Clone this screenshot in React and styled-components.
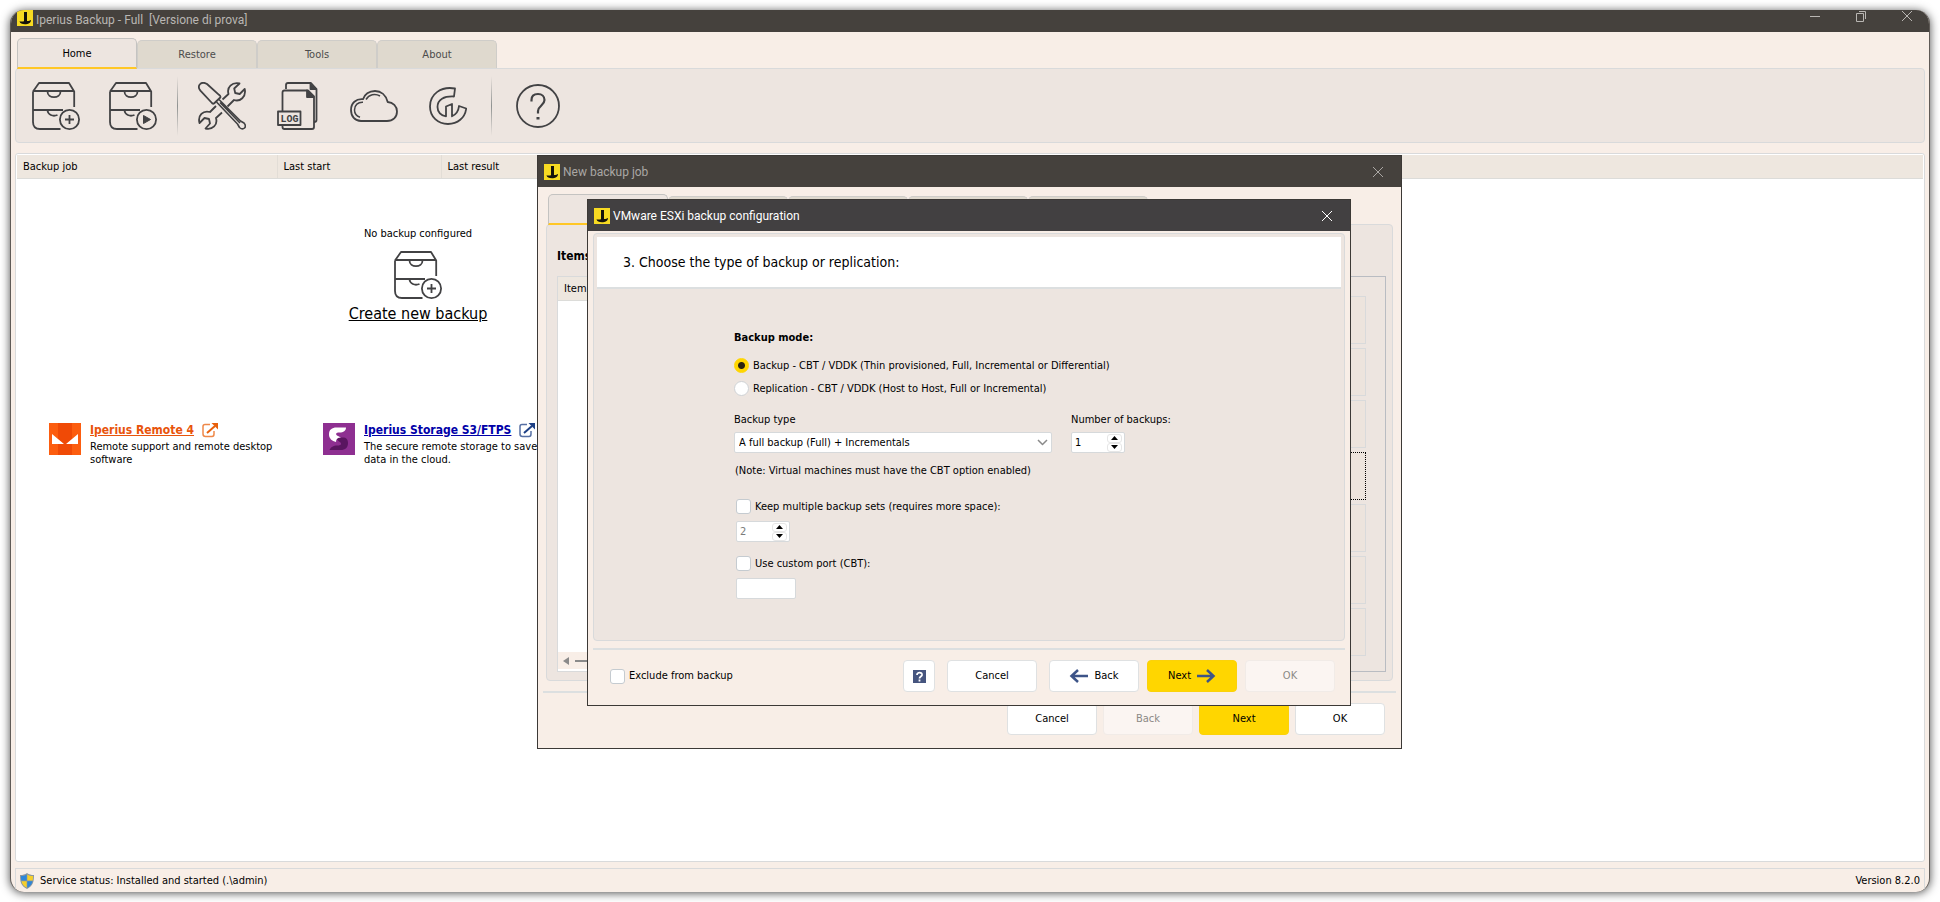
import React from 'react';
import styled, { createGlobalStyle, css } from 'styled-components';

const color = {
    window: '#f8eee7',
    panel: '#ede5e0',
    tab: '#dfd9ce',
    header: '#eee7df',
    title: '#45413d',
    titleActive: '#424041',
    border: '#d9dadb',
    line: '#dcdfe0',
    yellow: '#ffd600',
    amber: '#ffc726',
    ink: '#424244',
    navy: '#3d5488',
};

const uiFont = '"DejaVu Sans Condensed", Tahoma, "DejaVu Sans", sans-serif';
const titleFont = 'Roboto, "Segoe UI", "Noto Sans", sans-serif';

const GlobalStyle = createGlobalStyle`
    * {
        box-sizing: border-box;
    }
    body {
        margin: 0;
        background: #fff;
        color: #000;
        font: 11px/14px ${uiFont};
    }
    button,
    input,
    select {
        font: inherit;
        color: inherit;
    }
`;

// Window frame //
const Desktop = styled.div`
    position: relative;
    display: flex;
    min-height: 100vh;
    padding: 10px;
`;

const MainWindow = styled.main`
    flex: 1;
    display: flex;
    flex-direction: column;
    overflow: hidden;
    isolation: isolate;
    background: ${color.window};
    border: 1px solid #5f5a56;
    border-width: 0 1px;
    border-radius: 14px;
    box-shadow: 0 1px 10px rgba(0, 0, 0, 0.7);
`;

const TitleBar = styled.header`
    flex: none;
    display: flex;
    align-items: flex-start;
    height: 22px;
    padding: 0 16px 0 6px;
    background: ${color.title};
    color: #b9b6b3;
    font: 12px/20px ${titleFont};
`;

const TitleText = styled.h1`
    flex: 1;
    margin: 0 0 0 3px;
    font: inherit;
    white-space: pre;
`;

const WindowControls = styled.div`
    display: flex;
    gap: 32px;
`;

const WindowButton = styled.button`
    display: flex;
    padding: 0;
    border: 0;
    background: none;
    color: inherit;
`;

// Tabs and toolbar //
const Tabs = styled.nav`
    display: flex;
    align-items: flex-end;
    padding: ${({ $pad }) => $pad};
`;

const Tab = styled.button`
    width: 120px;
    height: 28px;
    padding: 0;
    border: 1px solid #cfcdc9;
    border-bottom: 0;
    border-radius: 5px 5px 0 0;
    background: ${color.tab};
    color: #4c4c4c;
    ${({ $active }) =>
        $active &&
        css`
            height: 31px;
            padding-top: 2px;
            border-color: #c4c3c1;
            border-bottom: 2px solid ${color.amber};
            background: ${color.panel};
            color: #000;
            margin-bottom: -1px;
            z-index: 1;
        `}
`;

const Toolbar = styled.div`
    display: flex;
    align-items: center;
    height: 75px;
    margin: 0 4px;
    padding: 0 16px;
    background: ${color.panel};
    border: 1px solid ${color.border};
    border-radius: 4px;
`;

const ToolGroup = styled.div`
    display: flex;
    align-items: center;
    gap: ${({ $gap }) => $gap}px;
`;

const ToolButton = styled.button`
    display: flex;
    padding: 0;
    border: 0;
    background: none;
    color: ${color.ink};
`;

const Divider = styled.span`
    width: 1px;
    height: 60px;
    margin: 0 ${({ $space }) => $space}px;
    background: linear-gradient(transparent, #8f9291, transparent);
`;

// Job list //
const JobList = styled.section`
    flex: 1;
    display: flex;
    flex-direction: column;
    margin: 10px 4px 6px;
    padding: 1px;
    background: #fff;
    border: 1px solid ${color.border};
    border-radius: 3px;
`;

const JobTable = styled.table`
    width: 100%;
    table-layout: fixed;
    border-collapse: collapse;
`;

const Th = styled.th`
    width: ${({ $width }) => $width}px;
    height: 23px;
    padding: 1px 6px 0;
    background: ${color.header};
    border-right: 1px solid #e2ddd6;
    border-bottom: 1px solid #dcdcd9;
    font-weight: normal;
    text-align: left;
    &:last-child {
        width: auto;
        border-right: 0;
    }
`;

const JobBody = styled.div`
    padding: 48px 32px 0;
`;

const EmptyState = styled.div`
    display: flex;
    flex-direction: column;
    align-items: center;
    width: 738px;
`;

const EmptyIcon = styled.div`
    display: flex;
    margin: 10px 0 4px;
`;

const CreateLink = styled.a`
    color: #000;
    font-size: 16px;
    line-height: 22px;
`;

const Promos = styled.div`
    display: flex;
    margin-top: 98px;
`;

const Promo = styled.article`
    display: flex;
    gap: 9px;
    width: 274px;
    svg {
        flex: none;
    }
`;

const PromoText = styled.p`
    width: 190px;
    margin: 2px 0 0;
    line-height: 13px;
`;

const PromoLink = styled.a`
    display: flex;
    gap: 8px;
    color: ${({ $color }) => $color};
    font-size: 12px;
    line-height: 15px;
    font-weight: bold;
    white-space: nowrap;
`;

const StatusBar = styled.footer`
    display: flex;
    align-items: center;
    height: 24px;
    margin: 0 4px;
    padding: 1px 4px 0;
    gap: 6px;
    border: 1px solid ${color.border};
    border-bottom: 0;
    span:last-child {
        margin-left: auto;
    }
`;

// Dialogs //
const Dialog = styled.section`
    position: absolute;
    isolation: isolate;
    left: ${({ $left }) => $left}px;
    top: ${({ $top }) => $top}px;
    width: ${({ $width }) => $width}px;
    background: ${color.window};
    border: 1px solid #3c3936;
`;

const DialogTitle = styled(TitleBar)`
    align-items: center;
    height: 31px;
    padding: 0 17px 0 6px;
    background: ${({ $active }) => ($active ? color.titleActive : color.title)};
    color: ${({ $active }) => ($active ? '#fff' : '#aaa7a4')};
`;

const DialogHeading = styled(TitleText).attrs({ as: 'h2' })``;

const ItemsPanel = styled.div`
    margin: 0 8px;
    padding: 24px 6px 8px 10px;
    background: ${color.panel};
    border: 1px solid ${color.border};
    border-radius: 4px;
`;

const ItemsHeading = styled.h3`
    margin: 0 0 13px;
    font-size: 12px;
    line-height: 14px;
`;

const ItemsRow = styled.div`
    display: flex;
    gap: 12px;
`;

const ItemsList = styled.div`
    flex: 1;
    display: flex;
    flex-direction: column;
    background: #fff;
    border: 1px solid ${color.border};
`;

const ItemsBody = styled.div`
    flex: 1;
`;

const ScrollTrack = styled.div`
    display: flex;
    align-items: center;
    gap: 6px;
    height: 17px;
    margin-bottom: 2px;
    padding: 0 5px;
    background: ${color.window};
    span {
        flex: 1;
        height: 2px;
        background: #8a8a8a;
    }
`;

const ItemActions = styled.div`
    display: grid;
    gap: 4px;
    width: 200px;
    padding: 19px 19px 15px;
    border: 1px solid #b9bcc2;
`;

const ItemAction = styled.button`
    height: 48px;
    border: 1px solid ${color.border};
    background: #ede4dd;
    ${({ $focused }) => $focused && 'border: 1px dotted #000;'}
`;

const Separator = styled.hr`
    height: 2px;
    margin: ${({ $top }) => $top}px 5px 0;
    border: 0;
    background: ${color.line};
`;

const DialogFooter = styled.footer`
    display: flex;
    justify-content: flex-end;
    align-items: center;
    gap: ${({ $gap }) => $gap}px;
    padding: ${({ $pad }) => $pad};
`;

const Button = styled.button`
    display: flex;
    align-items: center;
    justify-content: center;
    gap: 5px;
    width: ${({ $square }) => ($square ? 32 : 90)}px;
    height: 32px;
    padding: 0;
    background: ${({ $primary }) => ($primary ? color.yellow : '#fff')};
    border: 1px solid ${({ $primary }) => ($primary ? '#fbd20a' : '#dfe1e2')};
    border-radius: 4px;
    &:disabled {
        background: #fbf5f2;
        border-color: #f1ebe7;
        color: #8c8986;
    }
`;

const ConfigPanel = styled.form`
    margin: 2px 5px 0;
    padding: 3px;
    background: ${color.panel};
    border: 1px solid ${color.border};
    border-radius: 4px;
`;

const StepHeader = styled.h3`
    margin: 0;
    padding: 0 26px;
    background: #fff;
    box-shadow: 0 2px 0 ${color.line};
    font-weight: normal;
    font-size: 14px;
    line-height: 50px;
`;

const Form = styled.div`
    padding: 44px 0 24px 137px;
`;

const ModeGroup = styled.fieldset`
    display: grid;
    gap: 8px;
    margin: 0 0 17px;
    padding: 0;
    border: 0;
`;

const Legend = styled.legend`
    margin-bottom: 13px;
    padding: 0;
    font-weight: bold;
`;

const CheckLabel = styled.label`
    display: flex;
    align-items: center;
    gap: 4px;
    height: 15px;
`;

const Radio = styled.input.attrs({ type: 'radio' })`
    appearance: none;
    width: 15px;
    height: 15px;
    margin: 0;
    border: 1px solid #cfd2d5;
    border-radius: 50%;
    background: #fff;
    &:checked {
        border-color: ${color.yellow};
        background: radial-gradient(circle, #2b2410 3px, ${color.yellow} 4px);
    }
`;

const Checkbox = styled.input.attrs({ type: 'checkbox' })`
    appearance: none;
    width: 15px;
    height: 15px;
    margin: 0;
    border: 1px solid #c5cbd0;
    border-radius: 3px;
    background: #fff;
`;

const FieldRow = styled.div`
    display: flex;
    gap: 19px;
    margin-bottom: 11px;
`;

const Field = styled.div`
    display: grid;
    justify-items: start;
    gap: 5px;
`;

const SelectBox = styled.div`
    display: grid;
    align-items: center;
    width: 318px;
    select,
    svg {
        grid-area: 1 / 1;
    }
    svg {
        justify-self: end;
        margin-right: 4px;
        pointer-events: none;
    }
`;

const inputStyle = css`
    height: 21px;
    border: 1px solid #d6d9db;
    border-radius: 2px;
    background: #fff;
`;

const Select = styled.select`
    appearance: none;
    width: 100%;
    padding: 0 4px;
    ${inputStyle}
`;

const SpinBox = styled.div`
    display: flex;
    align-items: center;
    width: 54px;
    padding: 0 2px;
    ${inputStyle}
    input {
        flex: 1;
        min-width: 0;
        padding: 0 1px;
        border: 0;
        background: none;
        appearance: textfield;
    }
    input:disabled {
        color: #7b7b7b;
    }
`;

const SpinButtons = styled.div`
    display: grid;
    button {
        display: flex;
        align-items: center;
        justify-content: center;
        width: 15px;
        height: 9px;
        padding: 0;
        border: 1px solid #e6e6e6;
        border-radius: 3px;
        background: #fff;
    }
`;

const PortInput = styled.input`
    width: 60px;
    padding: 0 4px;
    ${inputStyle}
`;

const Note = styled.p`
    margin: 0 0 21px 1px;
`;

const Option = styled.div`
    display: grid;
    justify-items: start;
    gap: 7px;
    margin: 0 0 14px 2px;
`;

const ExcludeLabel = styled(CheckLabel)`
    margin-right: auto;
`;

// Icons //
const Icon = ({ w = 48, h = 48, children, ...rest }) => (
    <svg
        width={w}
        height={h}
        viewBox={`0 0 ${w} ${h}`}
        fill="none"
        stroke="currentColor"
        strokeWidth="1.8"
        strokeLinejoin="round"
        aria-hidden="true"
        {...rest}
    >
        {children}
    </svg>
);

const AppLogo = () => (
    <Icon w={16} h={16} stroke="none">
        <path d="M0 0h16v16H0z" fill="#f7da22" />
        <path
            d="M7 2h3v9c2 0 3-.5 4-1 0 3-3 4.200-6 4.200S3 13.500 2.500 11.200c1.500.4 3 .3 4.500 0z"
            fill="#15130b"
        />
    </Icon>
);

const Cabinet = ({ play }) => (
    <Icon stroke={color.ink}>
        <path d="M1 9.500 7 1h30l5.200 8.500V25M1 9.500V40q0 7 7 7h20.500M1 9h41M1 28h30M15.500 9.500c0 7.500 13 7.500 13 0M15.500 28.500c.5 4 5 6.500 10 4.500" />
        <circle cx="37.500" cy="37.500" r="9.600" />
        {play ? (
            <path d="M34.500 33.500v8l7-4z" fill={color.ink} strokeWidth="1" />
        ) : (
            <path d="M37.500 33v9M33 37.500h9" />
        )}
    </Icon>
);

const ToolsIcon = () => (
    <Icon>
        <path d="M2.400 8.600 13.500 20.500q1.200 1.700 2.500 1l6.300-6q.8-1-1.300-2.700L9 2C3-1.500-1.500 4 2.400 8.600z" />
        <path d="m18.500 20 21 22 2 3.500q3 2.500 5 .5t-.5-5L42.500 39 21 17.500M22 20.500l20 20.500" strokeWidth="1.600" />
        <path d="m24.500 17.500 6-5.500C28.500 5 34 0 41.500 1.500l-5.300 5 1 4.500 4.500 1 5-5C48.500 15 42 20 36 18l-6.500 6.500" />
        <path d="m24 30.500-6 5.500c2 7-3.500 12-10.500 10.500l4.500-5-1-4.500-4.500-1-5 5C-.5 33.500 5 28 12 30l6-6" />
    </Icon>
);

const LogIcon = () => (
    <Icon w={42}>
        <path d="M9 7V3q0-2 2-2h23l5.500 6v31q0 2-2.500 2" />
        <path d="M33.500 1v6h6M30 8.500V15h6.500z" fill="currentColor" />
        <path d="M5.500 29V10.500q0-2 2-2H31l6 6V45q0 2-2 2H7.500q-2 0-2-2v-2" />
        <rect x="1" y="29.500" width="22.500" height="13.500" />
        <text
            x="12.500"
            y="40"
            textAnchor="middle"
            fontFamily="Liberation Mono, monospace"
            fontSize="10"
            fontWeight="bold"
            fill="currentColor"
            stroke="none"
        >
            LOG
        </text>
    </Icon>
);

const CloudIcon = () => (
    <Icon h={32}>
        <path d="M11 31h26c6 0 10-4 10-9.500S43 12.300 37.700 12C36 5 31 1 25 1 19 1 14.500 4.500 13 9.200 6 8.500 1 13 1 20c0 6.500 4 11 10 11z" />
        <path d="M13 12.300C8 12 4.500 15 4.500 20c0 3.500 2 6 5.500 7.300M16 9.500C19 4.500 25 3 30 6" strokeWidth="1.500" />
    </Icon>
);

const GaugeIcon = () => (
    <Icon w={38} h={38}>
        <path d="M26 1.500C12-1 1 7 1 19.500 1 30 9 37 19 37c9.500 0 17-6 18.200-15.500L30 19c-.5 5-3 8.500-7 10.300V17l-6 2.500v9.800C12 29 8.500 25 8.500 20 8.500 12.500 15 9 25 9.500z" />
    </Icon>
);

const HelpIcon = () => (
    <Icon w={44} h={44}>
        <circle cx="22" cy="22" r="21" />
        <path d="M15.500 17.500V16c0-4 2.500-6 6.500-6s6.500 2.500 6.500 6c0 5.500-6.500 6-6.500 11v2.500" strokeWidth="2.200" />
        <path d="M22 33v2.500" strokeWidth="3" />
    </Icon>
);

const RemoteLogo = () => (
    <Icon w={32} h={32} stroke="none">
        <path d="M0 0h32v32H0z" fill="#fc5d0f" />
        <path d="M9 0h14v32H9z" fill="#f04a06" />
        <path d="M3 11v10h12zM29 11v10H17z" fill="#fff" />
    </Icon>
);

const StorageLogo = () => (
    <Icon w={32} h={32} stroke="none">
        <path d="M0 0h32v32H0z" fill="#8e2f91" />
        <path d="M12 14.500h7.500c4 0 5.500 2 5.500 5.500 0 4.500-2.500 7-7.500 7H6.500c1.500-3 3.500-4.500 8-4.500 4.500 0 4.500-2.500 1.500-4z" fill="#5a1560" />
        <path d="M23 4.500c0 3.500-2.500 5-6.500 5-4 0-4.500 2-1.500 3.500l3 1.500c-3.500 0-5 1.500-5 4.500-4-1-7-3.500-7-7.500 0-5 3-7 7.500-7z" fill="#fff" />
    </Icon>
);

const ExternalIcon = ({ accent }) => (
    <Icon w={16} h={15} strokeWidth="1.500">
        <path d="M8 1.500H3q-2 0-2 2V11q0 2.500 2.500 2.500H10q2 0 2-2.500V8" stroke={accent} opacity=".75" />
        <path d="M5 10 13 3" stroke={accent} strokeWidth="2" />
        <path d="M9.500 0H16v6.500z" fill={accent} stroke="none" />
    </Icon>
);

const Shield = () => (
    <Icon w={14} h={16} stroke="none">
        <path d="M7 0c2 1.500 4 2 7 2 0 7-1 11-7 14C1 13 0 9 0 2c3 0 5-.5 7-2z" fill="#8d979f" />
        <path d="M6.700 1.500V7.500H1.300C1 6 1 4.500 1 3c2.500 0 4-.5 5.700-1.500zM7.300 8.200h5.200c-.6 3-2.200 5-5.200 6.500z" fill="#2f86d8" />
        <path d="M7.300 1.500V7.500h5.400C13 6 13 4.500 13 3c-2.500 0-4-.5-5.700-1.500zM6.700 8.200H1.500c.6 3 2.200 5 5.200 6.500z" fill="#f6cf2b" />
    </Icon>
);

const CloseIcon = () => (
    <Icon w={12} h={12} strokeWidth="1">
        <path d="m1 1 10 10M11 1 1 11" />
    </Icon>
);

const Arrow = ({ right }) => (
    <Icon w={20} h={14} stroke={color.navy} strokeWidth="2.500" strokeLinejoin="miter">
        {right ? <path d="M1 7h17M11 1l6.500 6-6.500 6" /> : <path d="M19 7H2M9 1 2.500 7 9 13" />}
    </Icon>
);

const Caret = ({ up }) => (
    <Icon w={7} h={4} stroke="none">
        <path d={up ? 'M0 4 3.500 0 7 4z' : 'M0 0l3.500 4L7 0z'} fill="#000" />
    </Icon>
);

const Spinner = ({ id, ...rest }) => (
    <SpinBox>
        <input id={id} type="number" {...rest} />
        <SpinButtons>
            <button type="button" aria-label="Increase"><Caret up /></button>
            <button type="button" aria-label="Decrease"><Caret /></button>
        </SpinButtons>
    </SpinBox>
);

const MAIN_TABS = ['Home', 'Restore', 'Tools', 'About'];

const MainArea = () => (
    <MainWindow>
        <TitleBar>
            <AppLogo />
            <TitleText>{'Iperius Backup - Full  [Versione di prova]'}</TitleText>
            <WindowControls>
                <WindowButton aria-label="Minimize">
                    <Icon w={12} h={12} strokeWidth="1"><path d="M1 6.500h10" /></Icon>
                </WindowButton>
                <WindowButton aria-label="Restore down">
                    <Icon w={16} h={12} strokeWidth="1">
                        <path d="M3.500 3.500h7v8h-7zM6 1.500h6.500V9" />
                    </Icon>
                </WindowButton>
                <WindowButton aria-label="Close"><CloseIcon /></WindowButton>
            </WindowControls>
        </TitleBar>
        <Tabs $pad="6px 6px 0">
            {MAIN_TABS.map((name, i) => (
                <Tab key={name} $active={i === 0}>{name}</Tab>
            ))}
        </Tabs>
        <Toolbar>
            <ToolGroup $gap={29}>
                <ToolButton aria-label="New backup job"><Cabinet /></ToolButton>
                <ToolButton aria-label="Run backup job"><Cabinet play /></ToolButton>
            </ToolGroup>
            <Divider $space={20} />
            <ToolGroup $gap={31}>
                <ToolButton aria-label="Settings"><ToolsIcon /></ToolButton>
                <ToolButton aria-label="Log"><LogIcon /></ToolButton>
                <ToolButton aria-label="Cloud"><CloudIcon /></ToolButton>
                <ToolButton aria-label="Console"><GaugeIcon /></ToolButton>
            </ToolGroup>
            <Divider $space={24} />
            <ToolButton aria-label="Help"><HelpIcon /></ToolButton>
        </Toolbar>
        <JobList>
            <JobTable>
                <thead>
                    <tr>
                        <Th $width={260}>Backup job</Th>
                        <Th $width={164}>Last start</Th>
                        <Th>Last result</Th>
                    </tr>
                </thead>
            </JobTable>
            <JobBody>
                <EmptyState>
                    <span>No backup configured</span>
                    <EmptyIcon><Cabinet /></EmptyIcon>
                    <CreateLink href="#new">Create new backup</CreateLink>
                </EmptyState>
                <Promos>
                    <Promo>
                        <RemoteLogo />
                        <div>
                            <PromoLink href="#remote" $color="#e8540c">
                                Iperius Remote 4 <ExternalIcon accent="#e8600c" />
                            </PromoLink>
                            <PromoText>Remote support and remote desktop software</PromoText>
                        </div>
                    </Promo>
                    <Promo>
                        <StorageLogo />
                        <div>
                            <PromoLink href="#storage" $color="#0000a8">
                                Iperius Storage S3/FTPS <ExternalIcon accent="#1d3f84" />
                            </PromoLink>
                            <PromoText>The secure remote storage to save data in the cloud.</PromoText>
                        </div>
                    </Promo>
                </Promos>
            </JobBody>
        </JobList>
        <StatusBar>
            <Shield />
            <span>Service status: Installed and started (.\admin)</span>
            <span>Version 8.2.0</span>
        </StatusBar>
    </MainWindow>
);

const JobDialog = () => (
    <Dialog $left={537} $top={155} $width={865} aria-labelledby="job-title">
        <DialogTitle>
            <AppLogo />
            <DialogHeading id="job-title">New backup job</DialogHeading>
            <WindowButton aria-label="Close"><CloseIcon /></WindowButton>
        </DialogTitle>
        <Tabs $pad="7px 10px 0">
            {[0, 1, 2, 3, 4].map((i) => (
                <Tab key={i} $active={i === 0} />
            ))}
        </Tabs>
        <ItemsPanel>
            <ItemsHeading>Items</ItemsHeading>
            <ItemsRow>
                <ItemsList>
                    <JobTable>
                        <thead>
                            <tr><Th>Item</Th></tr>
                        </thead>
                    </JobTable>
                    <ItemsBody />
                    <ScrollTrack>
                        <Icon w={6} h={8} stroke="none">
                            <path d="M6 0v8L0 4z" fill="#8a8a8a" />
                        </Icon>
                        <span />
                    </ScrollTrack>
                </ItemsList>
                <ItemActions>
                    {[0, 1, 2, 3, 4, 5, 6].map((i) => (
                        <ItemAction key={i} $focused={i === 3} />
                    ))}
                </ItemActions>
            </ItemsRow>
        </ItemsPanel>
        <Separator $top={10} />
        <DialogFooter $gap={6} $pad="10px 16px 13px">
            <Button>Cancel</Button>
            <Button disabled>Back</Button>
            <Button $primary>Next</Button>
            <Button>OK</Button>
        </DialogFooter>
    </Dialog>
);

const ConfigDialog = () => (
    <Dialog $left={587} $top={199} $width={764} aria-labelledby="config-title">
        <DialogTitle $active>
            <AppLogo />
            <DialogHeading id="config-title">VMware ESXi backup configuration</DialogHeading>
            <WindowButton aria-label="Close"><CloseIcon /></WindowButton>
        </DialogTitle>
        <ConfigPanel>
            <StepHeader>3. Choose the type of backup or replication:</StepHeader>
            <Form>
                <ModeGroup>
                    <Legend>Backup mode:</Legend>
                    <CheckLabel>
                        <Radio name="mode" defaultChecked />
                        Backup - CBT / VDDK (Thin provisioned, Full, Incremental or Differential)
                    </CheckLabel>
                    <CheckLabel>
                        <Radio name="mode" />
                        Replication - CBT / VDDK (Host to Host, Full or Incremental)
                    </CheckLabel>
                </ModeGroup>
                <FieldRow>
                    <Field>
                        <label htmlFor="backup-type">Backup type</label>
                        <SelectBox>
                            <Select id="backup-type">
                                <option>A full backup (Full) + Incrementals</option>
                            </Select>
                            <Icon w={11} h={7} stroke="#8a8a8a" strokeWidth="1.500">
                                <path d="m1 1 4.500 4.500L10 1" />
                            </Icon>
                        </SelectBox>
                    </Field>
                    <Field>
                        <label htmlFor="backup-count">Number of backups:</label>
                        <Spinner id="backup-count" defaultValue={1} />
                    </Field>
                </FieldRow>
                <Note>(Note: Virtual machines must have the CBT option enabled)</Note>
                <Option>
                    <CheckLabel>
                        <Checkbox />
                        Keep multiple backup sets (requires more space):
                    </CheckLabel>
                    <Spinner aria-label="Backup sets" defaultValue={2} disabled />
                </Option>
                <Option>
                    <CheckLabel>
                        <Checkbox />
                        Use custom port (CBT):
                    </CheckLabel>
                    <PortInput aria-label="Custom port" />
                </Option>
            </Form>
        </ConfigPanel>
        <Separator $top={7} />
        <DialogFooter $gap={8} $pad="10px 15px 13px 22px">
            <ExcludeLabel>
                <Checkbox />
                Exclude from backup
            </ExcludeLabel>
            <ToolGroup $gap={12}>
                <Button $square aria-label="Help">
                    <Icon w={13} h={13} stroke="none">
                        <path d="M0 0h13v13H0z" fill="#46557f" />
                        <path d="M4 5c0-3.500 5.500-3 5 0-.3 1.500-2.500 1.500-2.500 3.500M6.500 9.500v2" stroke="#fff" strokeWidth="1.800" />
                    </Icon>
                </Button>
                <Button>Cancel</Button>
                <Button><Arrow />Back</Button>
            </ToolGroup>
            <Button $primary>Next<Arrow right /></Button>
            <Button disabled>OK</Button>
        </DialogFooter>
    </Dialog>
);

const App = () => (
    <Desktop>
        <GlobalStyle />
        <MainArea />
        <JobDialog />
        <ConfigDialog />
    </Desktop>
);

export default App;
